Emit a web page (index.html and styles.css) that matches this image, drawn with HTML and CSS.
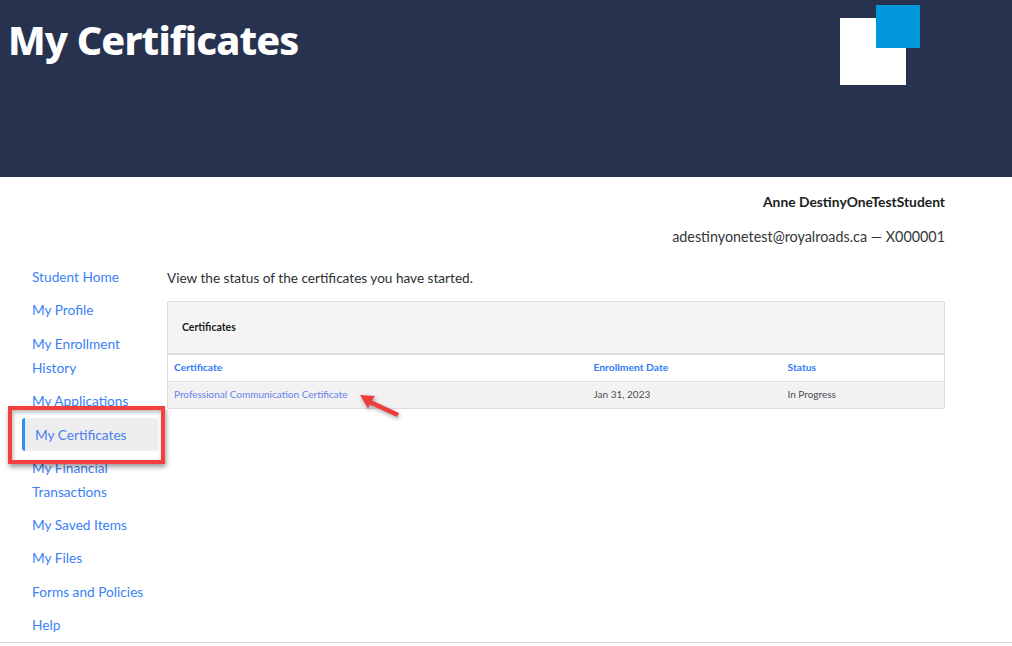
FILE: index.html
```html
<!DOCTYPE html>
<html lang="en">
<head>
<meta charset="utf-8">
<title>My Certificates</title>
<link rel="stylesheet" href="styles.css">
</head>
<body>
<header class="banner">
  <h1 class="banner-title">My Certificates</h1>
  <div class="logo"><div class="logo-white"></div><div class="logo-blue"></div></div>
</header>
<section class="identity">
  <p class="identity-name">Anne DestinyOneTestStudent</p>
  <p class="identity-mail">adestinyonetest@royalroads.ca — X000001</p>
</section>
<div class="layout">
  <nav class="side">
    <a class="side-link" href="#">Student Home</a>
    <a class="side-link" href="#">My Profile</a>
    <a class="side-link" href="#">My Enrollment History</a>
    <a class="side-link" href="#">My Applications</a>
    <a class="side-link side-link-active" href="#">My Certificates</a>
    <a class="side-link" href="#">My Financial Transactions</a>
    <a class="side-link" href="#">My Saved Items</a>
    <a class="side-link" href="#">My Files</a>
    <a class="side-link" href="#">Forms and Policies</a>
    <a class="side-link" href="#">Help</a>
    <div class="callout"></div>
  </nav>
  <main class="content">
    <p class="intro">View the status of the certificates you have started.</p>
    <section class="panel">
      <h2 class="panel-head">Certificates</h2>
      <div class="row row-head">
        <a class="cell-a" href="#">Certificate</a>
        <a class="cell-b" href="#">Enrollment Date</a>
        <a class="cell-c" href="#">Status</a>
      </div>
      <div class="row row-body">
        <a class="cell-a" href="#">Professional Communication Certificate</a>
        <span class="cell-b">Jan 31, 2023</span>
        <span class="cell-c">In Progress</span>
      </div>
      <svg class="arrow" width="46" height="30" viewBox="0 0 46 30">
        <path d="M2 3 L17 4 L14 8.5 L41 21 L39 25 L12 12.5 L10 16.5 Z" fill="#ee3b3b"/>
      </svg>
    </section>
  </main>
</div>
<footer class="foot"></footer>
</body>
</html>
```
FILE: styles.css
```css
* { box-sizing: border-box; }
html, body { margin: 0; padding: 0; }
body {
  width: 1012px;
  height: 646px;
  overflow: hidden;
  background: #fff;
  color: #212529;
  font-family: "Lato", "Noto Sans", sans-serif;
}
.banner {
  height: 177px;
  background: #27324f;
  display: flex;
  justify-content: space-between;
  align-items: flex-start;
  padding: 5px 92px 0 8px;
}
.banner-title {
  margin: 8px 0 0;
  font-family: "Noto Sans", sans-serif;
  font-weight: 800;
  font-size: 39.5px;
  line-height: 54px;
  letter-spacing: -0.85px;
  color: #fff;
}
.logo { position: relative; width: 80px; height: 80px; }
.logo-white { position: absolute; left: 0; top: 13px; width: 66px; height: 67px; background: #fff; }
.logo-blue { position: absolute; left: 36px; top: 0; width: 44px; height: 43px; background: #0098da; }
.identity { padding: 0 67px 0 0; text-align: right; }
.identity-name {
  margin: 16px 0 0;
  font-size: 13.85px;
  line-height: 18px;
  font-weight: 700;
  color: #1b1e21;
}
.identity-mail {
  margin: 17px 0 0;
  font-size: 14.35px;
  line-height: 18px;
  color: #33363a;
}
.layout { display: flex; padding-top: 13px; }
.side {
  position: relative;
  width: 167px;
  flex: none;
  padding: 6px 0 0 22px;
  display: flex;
  flex-direction: column;
}
.side-link {
  display: block;
  padding: 0 10px;
  font-size: 13.7px;
  line-height: 24px;
  margin-bottom: 9.4px;
  color: #3b7ff8;
  text-decoration: none;
}
.side-link-active {
  margin: -5px 9px 5px 0;
  padding: 5px 10px 4px 10px;
  height: 33px;
  background: #eeeeee;
  border-left: 3px solid #2b8ff5;
  border-radius: 3px;
  color: #4a7ff0;
}
.callout {
  position: absolute;
  left: 8px;
  top: 147px;
  width: 157px;
  height: 58px;
  border: 4px solid #f43f3f;
  box-shadow: 1px 3px 5px rgba(0, 0, 0, 0.4), inset 1px 2px 4px rgba(0, 0, 0, 0.3);
}
.content { width: 778px; flex: none; }
.intro { margin: 0; padding-top: 10px; font-size: 13.6px; line-height: 18px; color: #2c2f33; }
.panel {
  position: relative;
  margin-top: 14px;
  border: 1px solid #dcdcdc;
  border-radius: 2px;
}
.panel-head {
  margin: 0;
  height: 53px;
  padding: 0 14px 2px;
  display: flex;
  align-items: center;
  background: #f5f5f5;
  border-bottom: 2px solid #dedede;
  font-size: 10.5px;
  font-weight: 700;
  color: #1b1e21;
}
.row {
  display: flex;
  align-items: center;
  padding: 0 6px 2px;
  font-size: 10px;
}
.row a { text-decoration: none; }
.row-head { height: 27px; font-size: 10.3px; font-weight: 700; border-bottom: 1px solid #e0e0e0; }
.row-head a { color: #2f7cf6; }
.row-body { height: 26px; background: #f2f2f2; color: #4a4d52; }
.row-body a { color: #6a7ff0; }
.cell-a { width: 419.5px; flex: none; }
.cell-b { width: 194px; flex: none; }
.cell-c { flex: 1; }
.arrow {
  position: absolute;
  left: 190px;
  top: 90px;
  filter: drop-shadow(1px 2px 2px rgba(0, 0, 0, 0.35));
}
.foot {
  position: absolute;
  left: 0;
  top: 642px;
  width: 1012px;
  height: 1px;
  background: #cfdcea;
}
```
